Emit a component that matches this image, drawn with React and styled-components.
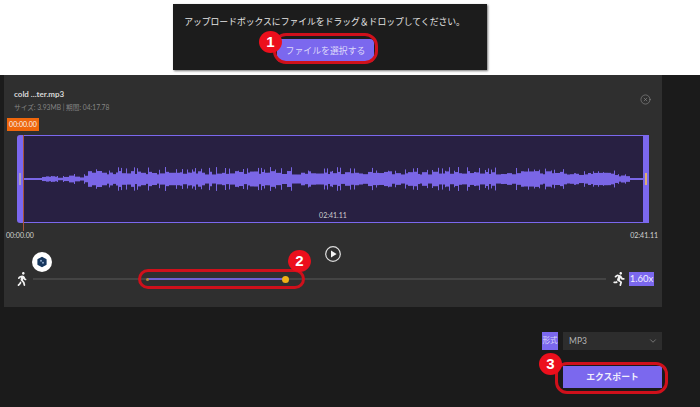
import React from 'react';
import styled, { createGlobalStyle } from 'styled-components';
import { FaWalking, FaRunning } from 'react-icons/fa';
import { ChevronDown, CircleX } from 'lucide-react';

const JP = `Lato, "Noto Sans CJK JP", sans-serif`;

// fixed pseudo random bars so the wave form looks the same on every load
function buildWave() {
  const bars = [];
  let seed = 11;
  const next = () => {
    seed = (seed * 16807) % 2147483647;
    return seed / 2147483647;
  };
  const regions = [
    [17, 1, 1, 1],
    [40, 1.2, 3, 3],
    [65, 1.5, 3.5, 5],
    [544, 4.5, 8, 12],
    [590, 3.5, 6.5, 9],
    [606, 2, 4.5, 5],
    [621, 1, 1, 1],
  ];
  let x = 0;
  while (x < 620) {
    const [, lo, hi, peak] = regions.find((r) => x < r[0]);
    const width = 2 + Math.floor(next() * 4);
    bars.push({ x, width, amp: lo + next() * (hi - lo) });
    x += width;
    if (next() > 0.55) {
      bars.push({ x, width: 1, amp: hi + next() * (peak - hi) });
      x += 1;
    }
  }
  return bars;
}

const wave = buildWave();

export default function App() {
  return (
    <>
      <GlobalStyle />
      <TopBand>
        <UploadPopup>
          <UploadText>アップロードボックスにファイルをドラッグ＆ドロップしてください。</UploadText>
          <SelectWrap>
            <SelectButton>ファイルを選択する</SelectButton>
            <SelectRing />
            <Badge $left={-18} $top={-8}>1</Badge>
          </SelectWrap>
        </UploadPopup>
      </TopBand>
      <Page>
        <Panel>
          <Header>
            <div>
              <FileName>cold ...ter.mp3</FileName>
              <FileMeta>サイズ: 3.93MB | 期間: 04:17.78</FileMeta>
            </div>
            <CloseIcon size={11} strokeWidth={1.2} />
          </Header>
          <StartBadge>00:00.00</StartBadge>
          <WaveBox>
            <Handle />
            <WaveArea>
              <svg width="620" height="86" viewBox="0 0 620 86">
                {wave.map((b) => (
                  <rect key={b.x} x={b.x} y={43 - b.amp} width={b.width} height={b.amp * 2} fill="#7a66e6" />
                ))}
              </svg>
              <WaveTime>02:41.11</WaveTime>
            </WaveArea>
            <Handle />
            <Playhead />
            <Grip $side="left" />
            <Grip $side="right" />
          </WaveBox>
          <TimeRow>
            <span>00:00.00</span>
            <span>02:41.11</span>
          </TimeRow>
          <PlayRow>
            <HexButton>
              <svg width="12" height="12" viewBox="0 0 12 12">
                <path d="M6 1.6 L9.8 3.8 V8.2 L6 10.4 L2.2 8.2 V3.8 Z" fill="#17375e" stroke="#17375e" strokeWidth="1.6" strokeLinejoin="round" />
                <circle cx="5" cy="4.8" r="1" fill="#8fa8c8" />
                <circle cx="7" cy="6.8" r="1" fill="#8fa8c8" />
              </svg>
            </HexButton>
            <PlayButton>
              <svg width="16" height="16" viewBox="0 0 16 16">
                <circle cx="8" cy="8" r="7.3" fill="none" stroke="#dedede" strokeWidth="1.2" />
                <path d="M6 4.4 L11.6 8 L6 11.6 Z" fill="#f4f4f4" strokeLinejoin="round" />
              </svg>
            </PlayButton>
          </PlayRow>
          <SpeedRow>
            <FaWalking size={14} color="#f2f2f2" />
            <Track>
              <ActiveTrack />
              <StartDot />
              <Thumb />
              <SpeedRing />
              <Badge $left={255} $top={-28}>2</Badge>
            </Track>
            <FaRunning size={14} color="#f2f2f2" />
            <SpeedLabel>1.60x</SpeedLabel>
          </SpeedRow>
        </Panel>
        <Footer>
          <FormatRow>
            <FormatLabel>形式</FormatLabel>
            <FormatSelect>
              MP3
              <ChevronDown size={10} strokeWidth={1.4} color="#a5a5a5" />
            </FormatSelect>
          </FormatRow>
          <ExportWrap>
            <ExportButton>エクスポート</ExportButton>
            <ExportRing />
            <Badge $left={-24} $top={-13}>3</Badge>
          </ExportWrap>
        </Footer>
      </Page>
    </>
  );
}

const GlobalStyle = createGlobalStyle`
  html, body {
    margin: 0;
    padding: 0;
    background: #1b1b1b;
  }
  body {
    width: 700px;
    height: 407px;
    overflow: hidden;
    font-family: ${JP};
  }
`;

const TopBand = styled.div`
  height: 75px;
  background: #fff;
  padding: 4px 0 0 173px;
  box-sizing: border-box;
`;

const UploadPopup = styled.div`
  width: 314px;
  height: 66px;
  box-sizing: border-box;
  background: #1c1c1c;
  box-shadow: 1px 1px 2px #777;
  display: flex;
  flex-direction: column;
  align-items: center;
  padding-top: 10px;
`;

const UploadText = styled.div`
  font-size: 8.8px;
  line-height: 15px;
  color: #e6e6e6;
  white-space: nowrap;
  margin-left: -11px;
`;

const SelectWrap = styled.div`
  position: relative;
  margin: 10px 0 0 -9px;
`;

const SelectButton = styled.div`
  width: 97px;
  height: 23px;
  border-radius: 4px;
  background: #7b68ee;
  color: #dedafa;
  font-size: 8.9px;
  display: flex;
  align-items: center;
  justify-content: center;
`;

const Ring = styled.div`
  position: absolute;
  box-sizing: border-box;
  border: 3px solid #cf101b;
  pointer-events: none;
`;

const SelectRing = styled(Ring)`
  left: -4px;
  right: -4px;
  top: -6px;
  bottom: -2px;
  border-radius: 13px;
`;

const SpeedRing = styled(Ring)`
  left: 105px;
  width: 167px;
  top: -9px;
  height: 20px;
  border-radius: 10px;
`;

const ExportRing = styled(Ring)`
  left: -8px;
  right: -6px;
  top: -4px;
  bottom: -6px;
  border-radius: 12px;
`;

const Badge = styled.div`
  position: absolute;
  left: ${(p) => p.$left}px;
  top: ${(p) => p.$top}px;
  width: 23px;
  height: 22px;
  border-radius: 50%;
  background: #ec0f1c;
  color: #fff;
  font: bold 15px/22px "Liberation Sans", sans-serif;
  text-align: center;
`;

const Page = styled.div`
  height: 332px;
  background: #1b1b1b;
`;

const Panel = styled.div`
  width: 658px;
  height: 232px;
  margin-left: 4px;
  box-sizing: border-box;
  background: #2f2f2f;
  padding-top: 12px;
`;

const Header = styled.div`
  display: flex;
  justify-content: space-between;
  padding: 0 11px 0 10px;
`;

const FileName = styled.div`
  font-size: 8px;
  line-height: 14px;
  font-weight: 700;
  color: #d8d8d8;
`;

const FileMeta = styled.div`
  font-size: 6.7px;
  line-height: 12px;
  color: #848484;
`;

const CloseIcon = styled(CircleX)`
  color: #9a9a9a;
  margin-top: 7px;
`;

const StartBadge = styled.div`
  width: 32px;
  height: 13px;
  margin: 5px 0 0 3px;
  background: #f0670c;
  color: #f5f5f5;
  font-size: 7px;
  line-height: 13px;
  text-align: center;
`;

const WaveBox = styled.div`
  position: relative;
  display: flex;
  width: 632px;
  height: 88px;
  margin: 4px 0 0 13px;
`;

const Handle = styled.div`
  width: 6px;
  background: #7b68ee;
  &:first-child {
    border-radius: 3px 0 0 3px;
  }
  &:last-of-type {
    border-radius: 0 3px 3px 0;
  }
`;

const WaveArea = styled.div`
  position: relative;
  flex: 1;
  background: #282042;
  border-top: 1px solid #7b68ee;
  border-bottom: 1px solid #7b68ee;
  line-height: 0;
`;

const WaveTime = styled.div`
  position: absolute;
  left: 0;
  right: 0;
  bottom: 2px;
  color: #cfcfcf;
  font-size: 7px;
  line-height: 10px;
  text-align: center;
`;

const Playhead = styled.div`
  position: absolute;
  left: 6px;
  top: 0;
  width: 1px;
  height: 96px;
  background: #a8543a;
`;

const Grip = styled.div`
  position: absolute;
  top: 38px;
  ${(p) => (p.$side === 'left' ? 'left: 2px;' : 'right: 2px;')}
  width: 2px;
  height: 12px;
  background: ${(p) => (p.$side === 'left' ? '#a89fc0' : '#e0b070')};
`;

const TimeRow = styled.div`
  display: flex;
  justify-content: space-between;
  padding: 0 4px 0 2px;
  margin-top: 6px;
  color: #d4d4d4;
  font-size: 7px;
  line-height: 12px;
`;

const PlayRow = styled.div`
  position: relative;
  display: flex;
  justify-content: center;
  margin-top: 5px;
`;

const PlayButton = styled.div`
  width: 16px;
  height: 16px;
  line-height: 0;
`;

const HexButton = styled.div`
  position: absolute;
  left: 28px;
  top: 6px;
  width: 20px;
  height: 20px;
  border-radius: 50%;
  background: #fff;
  display: flex;
  align-items: center;
  justify-content: center;
`;

const SpeedRow = styled.div`
  display: flex;
  align-items: center;
  height: 14px;
  margin-top: 10px;
  padding-left: 11px;
`;

const Track = styled.div`
  position: relative;
  width: 573px;
  height: 2px;
  margin: 0 6px 0 4px;
  background: #444;
`;

const ActiveTrack = styled.div`
  position: absolute;
  left: 114px;
  top: 0;
  width: 138px;
  height: 2px;
  background: #6f5fd0;
`;

const StartDot = styled.div`
  position: absolute;
  left: 113px;
  top: -0.5px;
  width: 3px;
  height: 3px;
  border-radius: 50%;
  background: #b08a3a;
`;

const Thumb = styled.div`
  position: absolute;
  left: 248.5px;
  top: -2.5px;
  width: 7px;
  height: 7px;
  border-radius: 50%;
  background: #f0b016;
`;

const SpeedLabel = styled.div`
  width: 25px;
  height: 14px;
  margin-left: 3px;
  background: #7b68ee;
  color: #f0eefc;
  font-size: 9.5px;
  line-height: 14px;
  text-align: center;
`;

const Footer = styled.div`
  display: flex;
  flex-direction: column;
  align-items: flex-end;
  width: 662px;
  padding-top: 25px;
`;

const FormatRow = styled.div`
  display: flex;
  gap: 5px;
`;

const FormatLabel = styled.div`
  width: 16px;
  height: 18px;
  background: #7b68ee;
  color: #dcd8f8;
  font-size: 7.5px;
  line-height: 18px;
  text-align: center;
`;

const FormatSelect = styled.div`
  width: 99px;
  height: 18px;
  box-sizing: border-box;
  padding: 0 4px 0 6px;
  background: #2d2d2d;
  color: #b5b5b5;
  font-size: 8.5px;
  display: flex;
  align-items: center;
  justify-content: space-between;
`;

const ExportWrap = styled.div`
  position: relative;
  margin-top: 16px;
`;

const ExportButton = styled.div`
  width: 99px;
  height: 22px;
  background: #7b68ee;
  color: #f0eefc;
  font-size: 8.8px;
  font-weight: 700;
  line-height: 22px;
  text-align: center;
`;
